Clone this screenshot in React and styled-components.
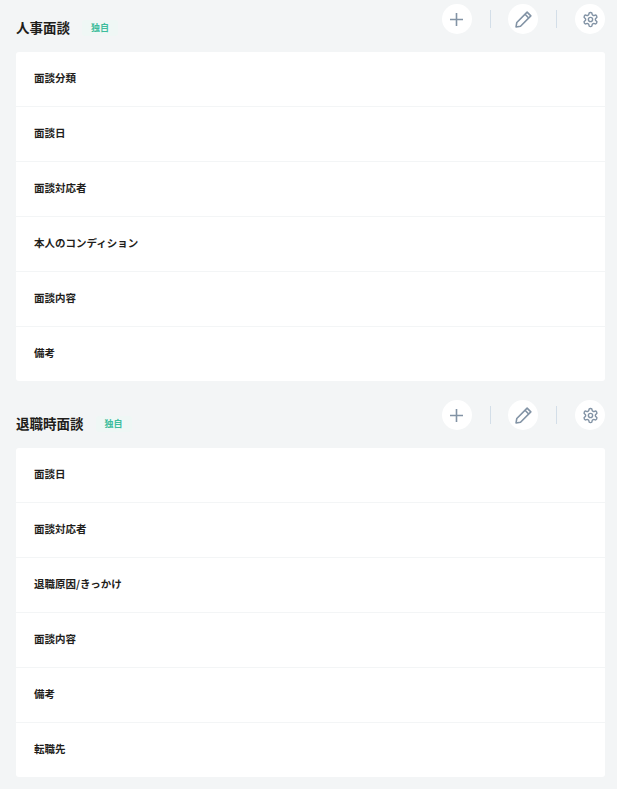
import styled, { createGlobalStyle } from "styled-components";

const GlobalStyle = createGlobalStyle`
  html, body {
    margin: 0;
    padding: 0;
    background: #f3f5f6;
    font-family: "Noto Sans CJK JP", "Noto Sans", sans-serif;
  }
`;

const Page = styled.div`
  padding: 4px 12px 0 16px;
`;

const Section = styled.section`
  margin-bottom: 19px;
`;

const Header = styled.div`
  display: flex;
  justify-content: space-between;
  height: 48px;
`;

const TitleGroup = styled.div`
  display: flex;
  align-items: center;
  height: 48px;
`;

const Title = styled.h2`
  margin: 0 0 2px;
  font-size: 13.5px;
  line-height: 20px;
  font-weight: 700;
  color: #1f1e1b;
`;

const Badge = styled.span`
  margin-left: 12px;
  padding: 0 9px;
  height: 16px;
  line-height: 16px;
  font-size: 9px;
  font-weight: 700;
  color: #3dbd9c;
  background: #eff7f5;
  border-radius: 3px;
`;

const Actions = styled.div`
  display: flex;
  align-items: flex-start;
`;

const IconButton = styled.button`
  width: 30px;
  height: 30px;
  padding: 0;
  border: none;
  border-radius: 50%;
  background: #fff;
  color: #8293a5;
  display: flex;
  align-items: center;
  justify-content: center;
`;

const Divider = styled.span`
  width: 1px;
  height: 18px;
  margin: 6px 17.6px 0 18px;
  background: #d3dee8;
`;

const Card = styled.div`
  background: #fff;
  border-radius: 3px;
`;

const Row = styled.div`
  height: 55px;
  box-sizing: border-box;
  padding: 0 0 4px 18px;
  display: flex;
  align-items: center;
  font-size: 10.5px;
  font-weight: 700;
  color: #1f1e1b;
  border-bottom: 1px solid #f3f5f6;
  &:last-child {
    height: 54px;
    border-bottom: none;
  }
`;

const PlusIcon = () => (
  <svg width="13" height="13" viewBox="0 0 13 13" fill="none" stroke="currentColor" strokeWidth="1.6">
    <path d="M6.5 0v13M0 6.5h13" />
  </svg>
);

const PencilIcon = () => (
  <svg width="17" height="17" viewBox="0 0 16 16" fill="none" stroke="currentColor" strokeWidth="1.5" strokeLinejoin="round">
    <path d="M1 15l.7-4.2L11.4 1.1l3.5 3.5-9.7 9.7z" />
    <path d="M9.4 3.1l3.5 3.5" />
  </svg>
);

const GearIcon = () => (
  <svg width="17" height="17" viewBox="0 0 24 24" fill="none" stroke="currentColor" strokeWidth="2" strokeLinecap="round" strokeLinejoin="round">
    <path d="M12.22 2h-.44a2 2 0 0 0-2 2v.18a2 2 0 0 1-1 1.73l-.43.25a2 2 0 0 1-2 0l-.15-.08a2 2 0 0 0-2.73.73l-.22.38a2 2 0 0 0 .73 2.73l.15.1a2 2 0 0 1 1 1.72v.51a2 2 0 0 1-1 1.74l-.15.09a2 2 0 0 0-.73 2.73l.22.38a2 2 0 0 0 2.73.73l.15-.08a2 2 0 0 1 2 0l.43.25a2 2 0 0 1 1 1.73V20a2 2 0 0 0 2 2h.44a2 2 0 0 0 2-2v-.18a2 2 0 0 1 1-1.73l.43-.25a2 2 0 0 1 2 0l.15.08a2 2 0 0 0 2.73-.73l.22-.39a2 2 0 0 0-.73-2.73l-.15-.08a2 2 0 0 1-1-1.74v-.5a2 2 0 0 1 1-1.74l.15-.09a2 2 0 0 0 .73-2.73l-.22-.38a2 2 0 0 0-2.73-.73l-.15.08a2 2 0 0 1-2 0l-.43-.25a2 2 0 0 1-1-1.73V4a2 2 0 0 0-2-2z" />
    <circle cx="12" cy="12" r="3" />
  </svg>
);

const sections = [
  {
    title: "人事面談",
    rows: ["面談分類", "面談日", "面談対応者", "本人のコンディション", "面談内容", "備考"],
  },
  {
    title: "退職時面談",
    rows: ["面談日", "面談対応者", "退職原因/きっかけ", "面談内容", "備考", "転職先"],
  },
];

export default function App() {
  return (
    <Page>
      <GlobalStyle />
      {sections.map((section) => (
        <Section key={section.title}>
          <Header>
            <TitleGroup>
              <Title>{section.title}</Title>
              <Badge>独自</Badge>
            </TitleGroup>
            <Actions>
              <IconButton><PlusIcon /></IconButton>
              <Divider />
              <IconButton><PencilIcon /></IconButton>
              <Divider />
              <IconButton><GearIcon /></IconButton>
            </Actions>
          </Header>
          <Card>
            {section.rows.map((row) => (
              <Row key={row}>{row}</Row>
            ))}
          </Card>
        </Section>
      ))}
    </Page>
  );
}
